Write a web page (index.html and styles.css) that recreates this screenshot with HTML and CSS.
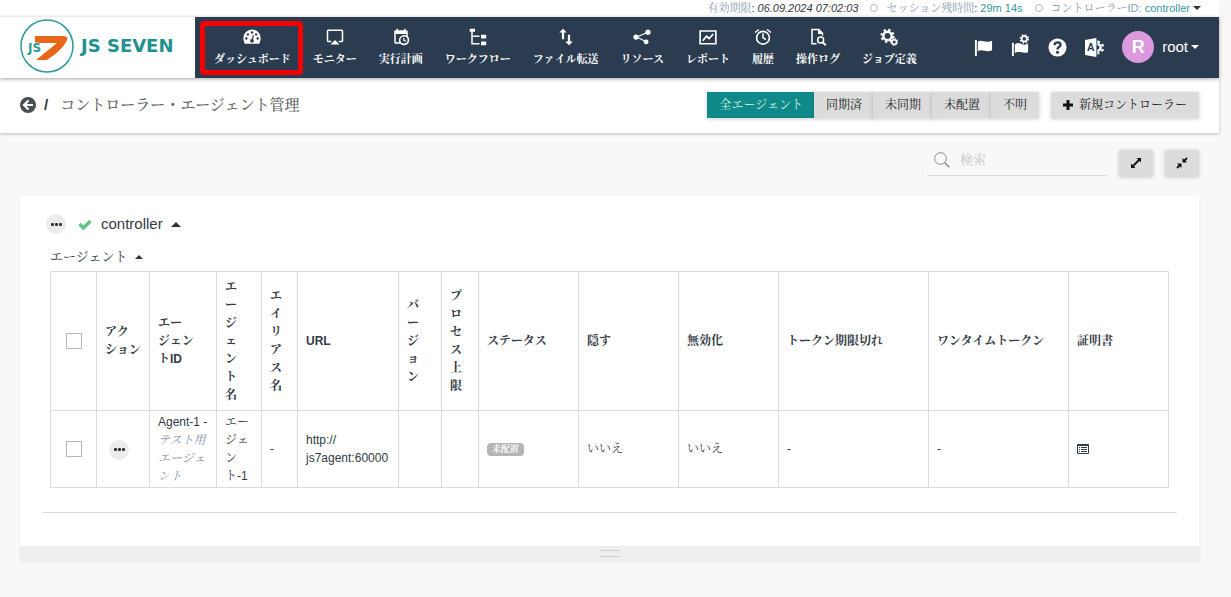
FILE: index.html
```html
<!DOCTYPE html>
<html lang="ja">
<head>
<meta charset="utf-8">
<title>コントローラー・エージェント管理</title>
<link rel="stylesheet" href="styles.css">
</head>
<body>
<div class="status">
  <span><span class="muted">有効期限</span>: <em>06.09.2024 07:02:03</em></span>
  <span class="ring"></span>
  <span><span class="muted">セッション残時間</span>: <span class="teal">29m 14s</span></span>
  <span class="ring"></span>
  <span class="ctl"><span class="muted">コントローラーID:</span> <a class="teal" href="#">controller</a> <i class="caret small"></i></span>
</div>
<header class="header">
  <a class="logo" href="#">
    <svg class="mark" viewBox="0 0 54 54" aria-hidden="true">
      <circle cx="27" cy="27" r="26" fill="#fff" stroke="#2a9a94" stroke-width="1.500"/>
      <path d="M15 17H43Q50 17 46 23Q42 31 27 41H16L37 24H15Z" fill="#e8651a"/>
      <text class="mark-text" x="8" y="33">JS</text>
    </svg>
    <span class="brand">JS SEVEN</span>
  </a>
  <div class="navbar">
    <nav class="nav">
      <a class="item active" href="#"><svg viewBox="0 0 24 24"><path fill="currentColor" d="M12 2A11.500 11.500 0 0 0 .5 13.500c0 3 1 5.500 2 7.500h19c1-2 2-4.500 2-7.500A11.500 11.500 0 0 0 12 2z"/><g fill="#2c3c50"><circle cx="12" cy="6" r="1.600"/><circle cx="6.500" cy="8.500" r="1.600"/><circle cx="17.500" cy="8.500" r="1.600"/><circle cx="4.500" cy="14" r="1.600"/><circle cx="19.500" cy="14" r="1.600"/><circle cx="12" cy="17" r="2.500"/></g><path d="M12 17l2-7.500" stroke="#2c3c50" stroke-width="1.600"/></svg>ダッシュボード</a>
      <a class="item" href="#"><svg viewBox="0 0 24 24"><path fill="currentColor" d="M6 22h12l-6-6zM21 2H3a2 2 0 0 0-2 2v13c0 1.100.9 2 2 2h4v-2H3V4h18v13h-4v2h4a2 2 0 0 0 2-2V4a2 2 0 0 0-2-2z"/></svg>モニター</a>
      <a class="item" href="#"><svg viewBox="0 0 24 24"><path fill="currentColor" d="M15 13h1.500v2.800l2.400 1.400-.7 1.300L15 16.700V13m4-5H5v11h4.700a7 7 0 0 1 9.300-9V8M5 21a2 2 0 0 1-2-2V5c0-1.100.9-2 2-2h1V1h2v2h8V1h2v2h1a2 2 0 0 1 2 2v6.100A7 7 0 1 1 11.100 21H5m11-9.800A4.800 4.800 0 1 0 16 20.800 4.800 4.800 0 0 0 16 11.200z"/></svg>実行計画</a>
      <a class="item" href="#"><svg viewBox="0 0 24 24"><path fill="currentColor" d="M1 1h7v4H1zM16 9h7v5h-7zM16 18h7v5h-7zM3 5h2v5h9v2H5v8h9v2H3z"/></svg>ワークフロー</a>
      <a class="item" href="#"><svg viewBox="0 0 24 24"><path fill="currentColor" d="M8 1L3 6h3.500v9h3V6H13zM17.500 18V9h-3v9H11l5 5 5-5z"/></svg>ファイル転送</a>
      <a class="item" href="#"><svg viewBox="0 0 24 24"><path d="M19 6L5 12l12 6" stroke="currentColor" stroke-width="1.500" fill="none"/><g fill="currentColor"><circle cx="4" cy="12" r="3.500"/><circle cx="20" cy="5.500" r="3.500"/><circle cx="17.500" cy="18.500" r="3.200"/></g></svg>リソース</a>
      <a class="item" href="#"><svg viewBox="0 0 24 24"><path d="M1.500 4h21v17h-21zM5 17l5-6 3.500 3L19 8" fill="none" stroke="currentColor" stroke-width="2.200"/></svg>レポート</a>
      <a class="item" href="#"><svg viewBox="0 0 24 24"><path d="M12 7v6l4 2.500M1.500 6l5-4M22.500 6l-5-4" fill="none" stroke="currentColor" stroke-width="2"/><circle cx="12" cy="13" r="8.500" fill="none" stroke="currentColor" stroke-width="2.200"/></svg>履歴</a>
      <a class="item" href="#"><svg viewBox="0 0 24 24"><path d="M10 21H4V2h9l5 5v3" fill="none" stroke="currentColor" stroke-width="2"/><path fill="currentColor" d="M12 1v7h7z"/><circle cx="15.500" cy="16" r="4" fill="none" stroke="currentColor" stroke-width="2"/><path d="M18 19l4.500 4" stroke="currentColor" stroke-width="2.500"/></svg>操作ログ</a>
      <a class="item" href="#"><svg viewBox="0 0 24 24"><circle cx="10" cy="10.500" r="5.500" fill="none" stroke="currentColor" stroke-width="3.200"/><circle cx="10" cy="10.500" r="8" fill="none" stroke="currentColor" stroke-width="3" stroke-dasharray="3.140 3.140"/><circle cx="19" cy="18.500" r="3" fill="none" stroke="currentColor" stroke-width="2"/><circle cx="19" cy="18.500" r="4.500" fill="none" stroke="currentColor" stroke-width="1.500" stroke-dasharray="2 1.500"/></svg>ジョブ定義</a>
    </nav>
    <div class="tools">
      <button class="tool" aria-label="フラグ"><svg viewBox="0 0 20 20"><path fill="currentColor" d="M1 2h2v17H1zM4 4c4-3 7 2 15-1v10c-7 3-10-2-15 1z"/></svg></button>
      <button class="tool tall" aria-label="フラグ設定"><svg viewBox="0 0 20 24"><path fill="currentColor" d="M1 9h2v14H1zM4 11c2-2 4-2 6-1 2 1 5 2 8 0v9c-6 2-9-2-14 1z"/><circle cx="14" cy="5" r="2.800" fill="none" stroke="currentColor" stroke-width="1.800"/><circle cx="14" cy="5" r="4.200" fill="none" stroke="currentColor" stroke-width="1.600" stroke-dasharray="1.650 1.650"/></svg></button>
      <button class="tool" aria-label="ヘルプ"><svg viewBox="0 0 20 20"><circle cx="10" cy="10" r="9.500" fill="currentColor"/><path d="M6.800 7.500c.4-4 6.600-3.700 6.400-.2-.1 2.200-3.200 2-3.200 4.700" fill="none" stroke="#2c3c50" stroke-width="2.500"/><circle cx="10" cy="15" r="1.600" fill="#2c3c50"/></svg></button>
      <button class="tool" aria-label="言語"><svg viewBox="0 0 20 20"><path fill="currentColor" d="M0 2l12-2v20L0 18z"/><text class="lang" x="2" y="14">A</text><path d="M13 6.500a3.500 3.500 0 0 1 0 7" fill="none" stroke="currentColor" stroke-width="2.500"/><path d="M13 4a6 6 0 0 1 0 12" fill="none" stroke="currentColor" stroke-width="2.500" stroke-dasharray="2.700 2.700"/></svg></button>
      <button class="user"><span class="avatar">R</span><span>root</span><i class="caret"></i></button>
    </div>
  </div>
</header>
<div class="subbar">
  <a class="back" href="#" aria-label="戻る"><svg viewBox="0 0 16 16"><circle cx="8" cy="8" r="8" fill="#4a4e55"/><path d="M8.500 3.500L4 8l4.500 4.500M4 8h9" fill="none" stroke="#fff" stroke-width="2.200"/></svg></a>
  <b class="slash">/</b>
  <h1 class="title">コントローラー・エージェント管理</h1>
  <div class="group">
    <button class="btn on">全エージェント</button><button class="btn">同期済</button><button class="btn">未同期</button><button class="btn">未配置</button><button class="btn">不明</button>
  </div>
  <button class="btn new"><svg viewBox="0 0 10 10"><path d="M5 0v10M0 5h10" stroke="#111" stroke-width="3"/></svg>新規コントローラー</button>
</div>
<main class="main">
  <div class="filters">
    <label class="search"><svg viewBox="0 0 16 16"><circle cx="6.500" cy="6.500" r="5.800" fill="none" stroke="#888"/><path d="M10.800 10.800l4.500 4.500" stroke="#888" stroke-width="1.500"/></svg><input type="text" placeholder="検索" aria-label="検索"></label>
    <button class="btn square" aria-label="展開"><svg viewBox="0 0 12 12"><path d="M2.500 9.500l7-7" stroke="#111" stroke-width="1.800"/><path d="M6.500 1H11v4.500zM1 6.500V11h4.500z" fill="#111"/></svg></button>
    <button class="btn square" aria-label="折りたたむ"><svg viewBox="0 0 12 12"><path d="M1 11l3-3M11 1L8 4" stroke="#111" stroke-width="1.800"/><path d="M6.500 1v4.500H11zM1 6.500h4.500V11z" fill="#111"/></svg></button>
  </div>
  <section class="card">
    <div class="body">
      <div class="controller">
        <button class="dots" aria-label="メニュー"><i></i><i></i><i></i></button>
        <svg class="check" viewBox="0 0 14 11"><path d="M1.500 5L5.500 9l7-7" fill="none" stroke="#5fc387" stroke-width="3.500"/></svg>
        <span>controller</span><i class="caret up"></i>
      </div>
      <div class="agents"><span>エージェント</span><i class="caret up"></i></div>
      <table class="table">
        <colgroup><col class="c46"><col class="c53"><col class="c67"><col class="c45"><col class="c36"><col class="c101"><col class="c43"><col class="c37"><col class="c100"><col class="c100"><col class="c100"><col class="c150"><col class="c140"><col class="c100"></colgroup>
        <thead><tr>
          <th class="pick"><input type="checkbox" aria-label="すべて選択"></th>
          <th>アク<br>ション</th>
          <th>エー<br>ジェン<br>トID</th>
          <th>エ<br>ー<br>ジ<br>ェ<br>ン<br>ト<br>名</th>
          <th>エ<br>イ<br>リ<br>ア<br>ス<br>名</th>
          <th>URL</th>
          <th>バ<br>ー<br>ジ<br>ョ<br>ン</th>
          <th>プ<br>ロ<br>セ<br>ス<br>上<br>限</th>
          <th>ステータス</th><th>隠す</th><th>無効化</th><th>トークン期限切れ</th><th>ワンタイムトークン</th><th>証明書</th>
        </tr></thead>
        <tbody><tr>
          <td class="pick"><input type="checkbox" aria-label="Agent-1を選択"></td>
          <td class="act"><button class="dots" aria-label="アクション"><i></i><i></i><i></i></button></td>
          <td>Agent-1 -<br><em class="desc">テスト用<br>エージェ<br>ント</em></td>
          <td>エー<br>ジェ<br>ン<br>ト-1</td>
          <td>-</td>
          <td>http://<br>js7agent:60000</td>
          <td></td><td></td>
          <td><span class="badge">未配置</span></td>
          <td>いいえ</td><td>いいえ</td><td>-</td><td>-</td>
          <td class="cert"><button class="plain" aria-label="証明書"><svg viewBox="0 0 12 10"><path d="M.5.500h11v9H.5zM0 1.500h12M2 3.500h1M4 3.500h6M2 5.500h1M4 5.500h6M2 7.500h1M4 7.500h6" fill="none" stroke="#333b48"/></svg></button></td>
        </tr></tbody>
      </table>
      <hr class="rule">
    </div>
    <div class="resize"><i class="grip"></i></div>
  </section>
</main>
</body>
</html>
```
FILE: styles.css
```css
* { box-sizing: border-box; }
body {
  margin: 0;
  padding-right: 12px;
  min-height: 100vh;
  background: #f9f8f6;
  color: #333a44;
  font: 12px/18px "Liberation Sans", "Noto Serif CJK JP", "Noto Serif JP", "Noto Sans CJK JP", sans-serif;
}
button, input { font: inherit; color: inherit; }
button { border: 0; padding: 0; background: none; cursor: pointer; }
a { color: inherit; text-decoration: none; }
svg { display: block; flex: none; }

.caret {
  display: inline-block;
  border: 4px solid transparent;
  border-top-color: currentColor;
  border-bottom: 0;
}
.caret.small { vertical-align: 2px; color: #333; }
.caret.up {
  border-top: 0;
  border-right-width: 5px;
  border-bottom: 5px solid #333;
  border-left-width: 5px;
}

.status {
  display: flex;
  justify-content: flex-end;
  align-items: center;
  height: 17px;
  padding: 0 18px 1px 0;
  background: #fff;
  font-size: 11px;
  line-height: 16px;
  white-space: nowrap;
}
.muted { color: #8d9bb0; }
.teal { color: #3a98a0; }
.ring {
  width: 8px;
  height: 8px;
  margin: 0 8px 0 12px;
  border: 1px solid #b4b8bc;
  border-radius: 50%;
}

.header {
  position: relative;
  display: flex;
  height: 61px;
  background: #fff;
  box-shadow: 0 1px 4px rgba(0, 0, 0, .35);
}
.logo {
  display: flex;
  align-items: center;
  flex: none;
  gap: 7px;
  width: 195px;
  padding: 0 0 3px 20px;
}
.mark { width: 54px; height: 54px; }
.mark-text {
  font: bold 12px "DejaVu Sans", sans-serif;
  fill: #2a9a94;
  stroke: #fff;
  stroke-width: 1px;
  paint-order: stroke;
}
.brand { font: bold 18px/20px "DejaVu Sans", sans-serif; color: #1f918f; white-space: nowrap; }
.navbar {
  display: flex;
  flex: 1;
  justify-content: space-between;
  padding: 0 20px 0 8px;
  background: #2c3c50;
  color: #fff;
}
.nav { display: flex; }
.item {
  position: relative;
  display: flex;
  flex-direction: column;
  align-items: center;
  gap: 4px;
  padding: 11px 11px 0;
  font-size: 11px;
  font-weight: bold;
  line-height: 18px;
  white-space: nowrap;
}
.item svg { width: 18px; height: 18px; }
.item.active::after {
  content: "";
  position: absolute;
  inset: 4px -1px 3px -3px;
  border: 5px solid #f40000;
  border-radius: 4px;
}
.tools { display: flex; align-items: center; gap: 18px; padding-bottom: 1px; }
.tool svg { width: 19px; height: 19px; }
.tool.tall svg { height: 23px; }
.tool.tall { padding-bottom: 4px; }
.lang { font: bold 11px "Liberation Sans", sans-serif; fill: #2c3c50; }
.user { display: flex; align-items: center; font-size: 15px; gap: 8px; }
.user .caret { margin-left: -5px; }
.avatar {
  width: 32px;
  height: 32px;
  border-radius: 50%;
  background: #dd99dd;
  font-size: 18px;
  font-weight: bold;
  line-height: 32px;
}

.subbar {
  display: flex;
  align-items: center;
  height: 55px;
  padding: 0 20px 1px;
  background: #fff;
  box-shadow: 0 1px 3px rgba(0, 0, 0, .25);
}
.back svg { width: 16px; height: 16px; }
.slash { margin: 0 12px 0 8px; font-size: 15px; }
.title { flex: 1; margin: 0; color: #666; font-size: 15px; font-weight: 500; }
.group { display: flex; }
.btn {
  padding: 0 12px;
  height: 26px;
  background: #dcdcdc;
  color: #222;
  box-shadow: 0 1px 4px rgba(0, 0, 0, .2);
  white-space: nowrap;
}
.btn + .btn { margin-left: -1px; }
.btn.on { background: #108a88; color: #d8f5f0; }
.btn.new { display: flex; align-items: center; gap: 6px; margin-left: 12px; }
.new svg { width: 10px; height: 10px; }

.main { padding: 17px 20px 0; }
.filters { display: flex; justify-content: flex-end; gap: 12px; }
.search {
  display: flex;
  align-items: center;
  gap: 10px;
  width: 180px;
  height: 26px;
  padding: 0 0 6px 7px;
  border-bottom: 1px solid #d8d8d8;
}
.search svg { width: 16px; height: 16px; }
.search input { flex: 1; min-width: 0; padding: 0; border: 0; outline: 0; background: none; font-size: 13px; }
.search input::placeholder { color: #c4c4c4; }
.btn.square { display: flex; align-items: center; justify-content: center; width: 34px; margin: 0; padding: 0; }
.square svg { width: 12px; height: 12px; }

.card { margin-top: 20px; background: #fff; box-shadow: 0 1px 3px rgba(0, 0, 0, .06); }
.body { padding: 17px 22px 33px; }
.controller { display: flex; align-items: center; padding-left: 4px; font-size: 15px; line-height: 22px; }
.controller .check { width: 14px; height: 11px; margin: 0 9px 0 12px; }
.controller .caret { margin-left: 8px; }
.dots {
  display: inline-flex;
  align-items: center;
  justify-content: center;
  gap: 1px;
  width: 20px;
  height: 20px;
  border-radius: 50%;
  background: #ececec;
}
.dots i { width: 3px; height: 3px; border-radius: 1px; background: #333; }
.agents { display: flex; align-items: center; gap: 8px; margin: 13px 8px 5px; font-size: 13px; }
.agents .caret { border-width: 0 4px 4px; }

.table { width: calc(100% - 16px); margin: 0 8px; border-collapse: collapse; table-layout: fixed; }
.table th, .table td { border: 1px solid #dcdcdc; padding: 2px 8px; text-align: left; white-space: nowrap; }
.table th { padding: 6px 8px; }
.table .pick { text-align: center; }
.table .act { padding-left: 12px; }
.table .desc { color: #7d8fae; }
.pick input {
  appearance: none;
  display: block;
  width: 16px;
  height: 16px;
  margin: 0 auto;
  border: 1px solid #b8b8b8;
  background: #fff;
}
.badge {
  display: block;
  width: fit-content;
  padding: 0 5px;
  border-radius: 4px;
  background: #b5b5b5;
  color: #fff;
  font-size: 9px;
  font-weight: bold;
  line-height: 13px;
}
.plain { display: block; }
.plain svg { width: 12px; height: 10px; }
.c36 { width: 36px; } .c37 { width: 37px; } .c43 { width: 43px; } .c45 { width: 45px; }
.c46 { width: 46px; } .c53 { width: 53px; } .c67 { width: 67px; } .c100 { width: 100px; }
.c101 { width: 101px; } .c140 { width: 140px; } .c150 { width: 150px; }
.rule { margin: 24px 0 0; border: 0; border-top: 1px solid #dcdcdc; }
.resize { display: flex; justify-content: center; padding: 4px 0; background: #eee; }
.grip { width: 20px; height: 7px; border: solid #ccc; border-width: 1px 0; }
```
